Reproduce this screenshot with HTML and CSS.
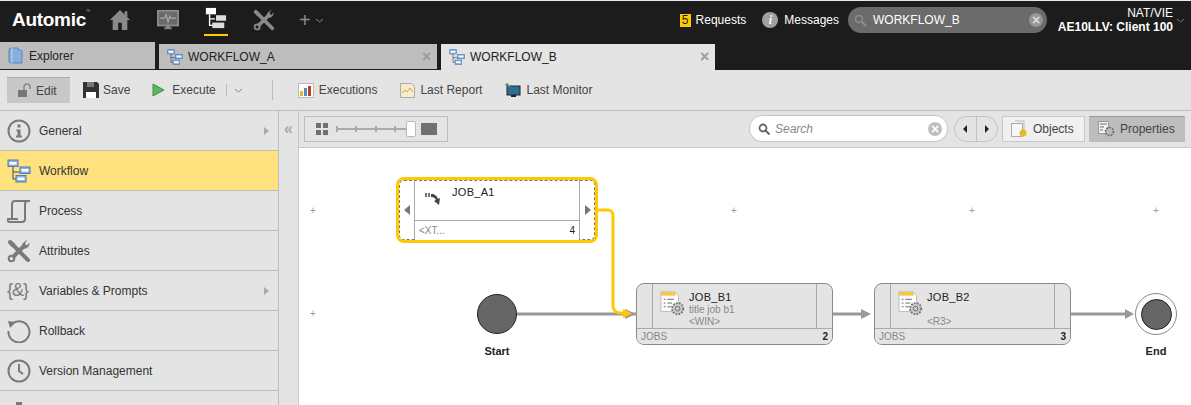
FILE: index.html
```html
<!DOCTYPE html>
<html lang="en">
<head>
    <meta charset="UTF-8">
    <title>Automic - WORKFLOW_B</title>
    <link rel="stylesheet" href="styles.css">
</head>
<body>
<svg class="defs" width="0" height="0">
    <symbol id="wf" viewBox="0 0 24 24">
        <path d="M6 7v13h5M6 13h8" fill="none" stroke="#445" stroke-width="1"/>
        <rect x="1" y="1" width="10" height="6.500" fill="#8db4e0" stroke="#4a7db5"/>
        <rect x="2.500" y="3" width="7" height="2.500" fill="#fff"/>
        <rect x="13" y="8" width="10" height="6.500" fill="#8db4e0" stroke="#4a7db5"/>
        <rect x="14.500" y="10" width="7" height="2.500" fill="#fff"/>
        <rect x="9" y="16.500" width="10" height="6.500" fill="#8db4e0" stroke="#4a7db5"/>
        <rect x="10.500" y="18.500" width="7" height="2.500" fill="#fff"/>
    </symbol>
    <symbol id="wrench" viewBox="0 0 24 24">
        <path d="M3 3l18 18" stroke="currentColor" stroke-width="4" stroke-linecap="round" fill="none"/>
        <path d="M1.500 4L4 1.500l4 3-3.500 3.500z" fill="currentColor"/>
        <path d="M18 6L5.500 18.500" stroke="currentColor" stroke-width="4" fill="none"/>
        <circle cx="4.500" cy="19.500" r="2.800" fill="none" stroke="currentColor" stroke-width="2"/>
        <path d="M22.500 3.500a5.500 5.500 0 0 1-8 5.500l1-4.500 4-3.500a5 5 0 0 1 .5 0l-2 3.500 2 2z" fill="currentColor"/>
    </symbol>
    <symbol id="jobdoc" viewBox="0 0 28 28">
        <path d="M1 1h15l4 4v17H1z" fill="#fdfdfd" stroke="#b8b8b8"/>
        <rect x="1" y="1" width="16" height="4" fill="#f7c948"/>
        <path d="M4 9h2M8 9h7M4 13h2M8 13h5M4 17h2M8 17h4" stroke="#666" stroke-width="1"/>
        <circle cx="19" cy="19" r="6" fill="#ccc" stroke="#777" stroke-width="2" stroke-dasharray="2 1.200"/>
        <circle cx="19" cy="19" r="2.500" fill="none" stroke="#666"/>
    </symbol>
</svg>

<header class="topbar">
    <div class="logo">Automic<sup>TM</sup></div>
    <nav class="mainnav">
        <svg class="ni" width="22" height="22" viewBox="0 0 24 24"><path d="M12 1l11 11h-3v11h-6v-8h-4v8H4V12H1z" fill="#8a8a8a"/><rect x="17" y="2.500" width="3" height="6" fill="#8a8a8a"/></svg>
        <svg class="ni" width="22" height="22" viewBox="0 0 24 24"><rect x="1" y="2" width="22" height="16" fill="#6a6a6a" stroke="#8a8a8a" stroke-width="2"/><path d="M3 10h5l2-4 2 8 2-6 1 2h6" fill="none" stroke="#aaa" stroke-width="1.300"/><path d="M8 22h8v-2H8z" fill="#8a8a8a"/><rect x="10" y="18" width="4" height="3" fill="#8a8a8a"/></svg>
        <div class="ni active">
            <svg width="22" height="22" viewBox="0 0 24 24"><path d="M5 8v12h4M5 13h6" fill="none" stroke="#fff" stroke-width="1.500"/><rect x="1" y="1" width="11" height="7" fill="#fff"/><rect x="12" y="9" width="11" height="6" fill="#ddd"/><rect x="8" y="17" width="13" height="6" fill="#ddd"/></svg>
        </div>
        <svg class="ni tools" width="22" height="22"><use href="#wrench"/></svg>
        <div class="addnew">+<svg width="9" height="5" viewBox="0 0 9 5"><path d="M1 1l3.500 3L8 1" fill="none" stroke="#8a8a8a"/></svg></div>
    </nav>
    <div class="status">
        <div class="req"><span class="badge">5</span>Requests</div>
        <div class="msg"><span class="infoi">i</span>Messages</div>
        <div class="gsearch">
            <svg width="13" height="13" viewBox="0 0 13 13"><circle cx="5" cy="5" r="3.500" fill="none" stroke="#8e8e8e" stroke-width="1.500"/><path d="M8 8l4 4" stroke="#8e8e8e" stroke-width="2"/></svg>
            <span class="gtext">WORKFLOW_B</span>
            <span class="clr dark">&#215;</span>
        </div>
        <div class="user">NAT/VIE<b>AE10LLV: Client 100</b></div>
        <svg class="userchev" width="9" height="5" viewBox="0 0 9 5"><path d="M1 1l3.500 3L8 1" fill="none" stroke="#777"/></svg>
    </div>
</header>

<div class="tabs">
    <div class="tab explorer">
        <svg width="15" height="17" viewBox="0 0 15 17"><path d="M1 2l3-1h6v2h3l1 1v12H4l-3-1z" fill="#86aede" stroke="#5d86bb"/><path d="M4 1v15" stroke="#c2d6ee"/></svg>
        Explorer
    </div>
    <div class="tab wa">
        <svg width="16" height="16"><use href="#wf"/></svg>
        WORKFLOW_A<span class="x">&#215;</span>
    </div>
    <div class="tab wb">
        <svg width="16" height="16"><use href="#wf"/></svg>
        WORKFLOW_B<span class="x">&#215;</span>
    </div>
</div>

<div class="toolbar">
    <div class="tbtn edit">
        <svg width="15" height="15" viewBox="0 0 15 15"><rect x="1" y="7" width="9" height="7" fill="#777"/><path d="M7 7V4a3 3 0 0 1 6 0v2" fill="none" stroke="#888" stroke-width="1.500"/></svg>
        Edit
    </div>
    <div class="tbtn save">
        <svg width="16" height="16" viewBox="0 0 16 16"><path d="M0 0h14l2 2v14H0z" fill="#333"/><rect x="3" y="10" width="10" height="6" fill="#fff"/><rect x="4" y="0" width="7" height="5" fill="#777"/></svg>
        Save
    </div>
    <div class="tbtn exec">
        <svg width="13" height="14" viewBox="0 0 13 14"><path d="M1 1l11 6-11 6z" fill="#5cb85c" stroke="#3d943d"/></svg>
        Execute
        <span class="sep small"></span>
        <svg width="9" height="5" viewBox="0 0 9 5"><path d="M1 1l3.500 3L8 1" fill="none" stroke="#888"/></svg>
    </div>
    <span class="sep"></span>
    <div class="tbtn first">
        <svg width="16" height="15" viewBox="0 0 16 15"><rect x=".5" y=".5" width="15" height="14" fill="#fff" stroke="#bbb"/><rect x="2" y="8" width="3" height="5" fill="#e8b923"/><rect x="6" y="5" width="3" height="8" fill="#4a90c2"/><rect x="10" y="3" width="3" height="10" fill="#c0392b"/></svg>
        Executions
    </div>
    <div class="tbtn report">
        <svg width="15" height="15" viewBox="0 0 15 15"><path d="M.5.5h11l3 3v11H.5z" fill="#f3ecd0" stroke="#aaa"/><path d="M2 10l3-3 2 2 3-4 3 4" fill="none" stroke="#d8a428"/></svg>
        Last Report
    </div>
    <div class="tbtn monitor">
        <svg width="17" height="16" viewBox="0 0 17 16"><rect x="3" y="4" width="13" height="9" fill="#2c6f96" stroke="#222"/><rect x="7" y="13" width="5" height="2" fill="#222"/><path d="M1 2l3-1 1 3 3 0-3 1-3-1z" fill="#4f9a5c"/></svg>
        Last Monitor
    </div>
</div>

<div class="main">
    <aside class="sidebar">
        <div class="row">
            <svg class="ic" width="24" height="24" viewBox="0 0 24 24"><circle cx="12" cy="12" r="10.500" fill="none" stroke="#7a7a7a" stroke-width="2"/><rect x="10.500" y="5.500" width="3" height="3" fill="#7a7a7a"/><path d="M9.500 10.500h4v6h1.500v2h-6v-2h1.500v-4h-1z" fill="#7a7a7a"/></svg>
            General<i class="more"></i>
        </div>
        <div class="row sel">
            <svg class="ic" width="24" height="24"><use href="#wf"/></svg>
            Workflow
        </div>
        <div class="row">
            <svg class="ic" width="24" height="24" viewBox="0 0 24 24"><path d="M23 2h-2c-2 0-3 1-3 3v15c0 2-1 3-3 3H3c-2 0-3-1-3-3h11M5 19V5c0-2 1-3 3-3h13" fill="none" stroke="#7a7a7a" stroke-width="2"/></svg>
            Process
        </div>
        <div class="row">
            <svg class="ic tools2" width="24" height="24"><use href="#wrench"/></svg>
            Attributes
        </div>
        <div class="row">
            <span class="ic amp">{&amp;}</span>
            Variables &amp; Prompts<i class="more"></i>
        </div>
        <div class="row">
            <svg class="ic" width="24" height="24" viewBox="0 0 24 24"><path d="M5 5a10.500 10.500 0 1 1-3.500 7" fill="none" stroke="#7a7a7a" stroke-width="2"/><path d="M1 2l8 1-6 6z" fill="#7a7a7a"/></svg>
            Rollback
        </div>
        <div class="row">
            <svg class="ic" width="24" height="24" viewBox="0 0 24 24"><circle cx="12" cy="12" r="10.500" fill="none" stroke="#7a7a7a" stroke-width="2"/><path d="M12 5v7l4 3" fill="none" stroke="#7a7a7a" stroke-width="2"/></svg>
            Version Management
        </div>
        <div class="row last">
            <svg class="ic" width="24" height="24" viewBox="0 0 24 24"><path d="M9 3h6v3h7v12H2V6h7z" fill="#7a7a7a"/></svg>
        </div>
    </aside>
    <div class="strip"><span class="collapse">&#171;</span></div>
    <section class="work">
        <div class="subbar">
            <div class="zoombox">
                <svg width="12" height="12" viewBox="0 0 12 12"><path d="M0 0h5v5H0zM7 0h5v5H7zM0 7h5v5H0zM7 7h5v5H7z" fill="#707070"/></svg>
                <div class="slider"><b></b><b></b><b></b><b></b><span class="thumb"></span></div>
                <span class="big"></span>
            </div>
            <div class="searchbox">
                <svg width="12" height="12" viewBox="0 0 12 12"><circle cx="5" cy="5" r="3.500" fill="none" stroke="#666" stroke-width="1.800"/><path d="M7.500 7.500l4 4" stroke="#666" stroke-width="2"/></svg>
                <span class="ph">Search</span>
                <span class="clr">&#215;</span>
            </div>
            <div class="pager"><span class="pg"><i class="tri l"></i></span><span class="pg"><i class="tri r"></i></span></div>
            <div class="vbtn">
                <svg width="17" height="17" viewBox="0 0 17 17"><path d="M4 1h9v12" fill="none" stroke="#bbb"/><rect x=".5" y="3.500" width="11" height="13" fill="#f8f8f8" stroke="#aaa"/><circle cx="12" cy="13" r="3.500" fill="#e8b923"/></svg>
                Objects
            </div>
            <div class="vbtn on">
                <svg width="17" height="17" viewBox="0 0 17 17"><rect x=".5" y="1.500" width="10" height="12" fill="#f4f4f4" stroke="#999"/><path d="M2 4h7M2 7h4M2 10h3" stroke="#668" /><circle cx="11.500" cy="11.500" r="4" fill="#bbb" stroke="#666" stroke-width="1.500" stroke-dasharray="2 1"/></svg>
                Properties
            </div>
        </div>

        <div class="canvas">
            <svg class="wires" width="892" height="257">
                <path d="M218 166h120" stroke="#999" stroke-width="3"/>
                <path d="M326 161l11 5-11 5z" fill="#999"/>
                <path d="M534 166h35" stroke="#999" stroke-width="3"/>
                <path d="M562 161l10 5-10 5z" fill="#999"/>
                <path d="M772 166h60" stroke="#999" stroke-width="3"/>
                <path d="M826 161l9 5-9 5z" fill="#999"/>
                <path d="M299 62h10a5 5 0 0 1 5 5v91a7 7 0 0 0 7 7h7" fill="none" stroke="#ffc800" stroke-width="3"/>
                <path d="M324 161l9 4.500-9 4.500z" fill="#ffc800"/>
            </svg>

            <span class="plus p1">+</span>
            <span class="plus p2">+</span>
            <span class="plus p3">+</span>
            <span class="plus p4">+</span>
            <span class="plus p5">+</span>

            <div class="node a1">
                <div class="side"><i class="tri l"></i></div>
                <div class="body">
                    <div class="top">
                        <svg class="ji" width="17" height="14" viewBox="0 0 17 14"><path d="M1 1v4M4 1v4" stroke="#444" stroke-width="1.500"/><path d="M6 2c4 0 6 2 7 5l2-1-1 7-5-4 2-1C10 6 9 5 6 5z" fill="#444"/></svg>
                        <div class="info"><div class="name">JOB_A1</div></div>
                    </div>
                    <div class="foot"><span>&lt;XT...</span><b>4</b></div>
                </div>
                <div class="side"><i class="tri r"></i></div>
            </div>

            <div class="node b1">
                <div class="side"></div>
                <div class="body">
                    <div class="top">
                        <svg class="ji" width="26" height="26"><use href="#jobdoc"/></svg>
                        <div class="info">
                            <div class="name">JOB_B1</div>
                            <div class="sub">title job b1</div>
                            <div class="sub">&lt;WIN&gt;</div>
                        </div>
                    </div>
                    <div class="foot"><span>JOBS</span><b>2</b></div>
                </div>
                <div class="side"></div>
            </div>

            <div class="node b2">
                <div class="side"></div>
                <div class="body">
                    <div class="top">
                        <svg class="ji" width="26" height="26"><use href="#jobdoc"/></svg>
                        <div class="info">
                            <div class="name">JOB_B2</div>
                            <div class="sub">&nbsp;</div>
                            <div class="sub">&lt;R3&gt;</div>
                        </div>
                    </div>
                    <div class="foot"><span>JOBS</span><b>3</b></div>
                </div>
                <div class="side"></div>
            </div>

            <div class="dot start"></div>
            <div class="lbl lstart">Start</div>
            <div class="ring"><div class="dot inner"></div></div>
            <div class="lbl lend">End</div>
        </div>
    </section>
</div>
</body>
</html>
```

FILE: styles.css
```css
* {
    box-sizing: border-box;
}

html, body {
    margin: 0;
    padding: 0;
    height: 405px;
    overflow: hidden;
}

body {
    font-family: "Liberation Sans", Arial, sans-serif;
    font-size: 12px;
    color: #333;
    background-color: #1c1c1c;
}

.defs {
    display: block;
    height: 0;
}

.topbar {
    height: 42px;
    border-top: 1px solid #e8e8e8;
    background-color: #1c1c1c;
    display: flex;
    align-items: center;
    color: #fff;
}

.logo {
    width: 109px;
    padding-left: 12px;
    font-size: 19px;
    font-weight: bold;
    letter-spacing: -0.3px;
    margin-top: -4px;
}

.logo sup {
    font-size: 3px;
    font-weight: normal;
    vertical-align: 14px;
    color: #999;
}

.mainnav {
    display: flex;
    align-items: center;
    gap: 26px;
    margin-top: -3px;
}

.ni {
    flex: none;
}

.ni.active {
    width: 24px;
    height: 29px;
    margin: 3px -1px 0;
    border-bottom: 2px solid #ffc800;
    display: flex;
    justify-content: center;
}

.tools {
    color: #8a8a8a;
}

.addnew {
    display: flex;
    align-items: center;
    gap: 4px;
    font-size: 20px;
    color: #8a8a8a;
    margin-left: -2px;
}

.status {
    margin-left: auto;
    display: flex;
    align-items: center;
    margin-top: -3px;
    padding-right: 6px;
}

.req, .msg {
    display: flex;
    align-items: center;
    gap: 5px;
}

.badge {
    width: 11px;
    height: 13px;
    background-color: #ffc800;
    color: #1c1c1c;
    text-align: center;
    line-height: 13px;
}

.msg {
    margin-left: 16px;
    gap: 6px;
}

.infoi {
    width: 16px;
    height: 16px;
    border-radius: 50%;
    background-color: #a0a0a0;
    color: #fff;
    font: italic bold 12px "Liberation Serif", serif;
    text-align: center;
    line-height: 16px;
}

.gsearch {
    width: 199px;
    height: 26px;
    margin-left: 9px;
    padding: 0 4px 0 6px;
    border-radius: 13px;
    background-color: #6b6b6b;
    display: flex;
    align-items: center;
    gap: 6px;
}

.gtext {
    flex: 1;
}

.clr {
    width: 14px;
    height: 14px;
    border-radius: 50%;
    background-color: #bdbdbd;
    color: #fff;
    font-size: 14px;
    font-weight: bold;
    line-height: 14px;
    text-align: center;
}

.clr.dark {
    background-color: #959595;
    color: #ddd;
}

.user {
    width: 126px;
    text-align: right;
    line-height: 14px;
}

.user b {
    display: block;
}

.userchev {
    margin-left: 3px;
}

.tabs {
    height: 27px;
    display: flex;
    align-items: flex-end;
    gap: 4px;
    padding-bottom: 0;
}

.tab {
    height: 25px;
    background-color: #bdbdbd;
    color: #222;
    display: flex;
    align-items: center;
    gap: 5px;
    padding-left: 8px;
    position: relative;
}

.tab.explorer {
    width: 155px;
    height: 27px;
    gap: 6px;
}

.tab.wa {
    width: 278px;
}

.tab.wb {
    width: 274px;
    height: 26px;
    margin-bottom: -1px;
    background-color: #e4e4e4;
}

.tab .x {
    margin-left: auto;
    margin-right: 3px;
    font-size: 16px;
    font-weight: bold;
    color: #9a9a9a;
    width: 12px;
}

.toolbar {
    height: 41px;
    margin-top: 1px;
    background-color: #e4e4e4;
    border-bottom: 1px solid #bdbdbd;
    display: flex;
    align-items: center;
    padding-left: 7px;
    color: #444;
}

.tbtn {
    display: flex;
    align-items: center;
    gap: 5px;
    height: 26px;
}

.edit {
    width: 63px;
    padding-left: 10px;
    gap: 4px;
    background-color: #c8c8c8;
    border-top: 1px solid #aaa;
}

.save {
    margin-left: 13px;
    gap: 4px;
}

.exec {
    margin-left: 22px;
    gap: 7px;
}

.sep {
    width: 1px;
    height: 20px;
    background-color: #bbb;
    margin-left: 29px;
}

.sep.small {
    height: 12px;
    margin: 0 0 0 3px;
}

.first {
    margin-left: 25px;
}

.report {
    margin-left: 23px;
}

.monitor {
    margin-left: 22px;
}

.main {
    height: 295px;
    display: flex;
    background-color: #e4e4e4;
}

.sidebar {
    width: 279px;
    border-right: 1px solid #bdbdbd;
    flex: none;
    overflow: hidden;
}

.row {
    height: 40px;
    border-bottom: 1px solid #bdbdbd;
    display: flex;
    align-items: center;
    padding: 0 9px 0 7px;
    gap: 8px;
}

.row.sel {
    background-color: #ffe17d;
}

.row.last {
    align-items: flex-start;
    padding-top: 8px;
}

.ic {
    flex: none;
    color: #7a7a7a;
}

.amp {
    width: 24px;
    font-size: 18px;
    white-space: nowrap;
    letter-spacing: -1px;
}

.more {
    margin-left: auto;
    width: 0;
    height: 0;
    border-left: 5px solid #aaa;
    border-top: 4px solid transparent;
    border-bottom: 4px solid transparent;
}

.strip {
    width: 20px;
    flex: none;
    border-right: 1px solid #c8c8c8;
    text-align: center;
}

.collapse {
    display: block;
    margin-top: 9px;
    font-size: 16px;
    font-weight: bold;
    color: #aaa;
}

.work {
    flex: 1;
    display: flex;
    flex-direction: column;
}

.subbar {
    height: 37px;
    border-bottom: 1px solid #c8c8c8;
    display: flex;
    align-items: center;
    padding: 0 6px 1px 5px;
}

.zoombox {
    width: 144px;
    height: 26px;
    border: 1px solid #bdbdbd;
    display: flex;
    align-items: center;
    padding-left: 11px;
}

.slider {
    width: 72px;
    height: 8px;
    margin-left: 8px;
    display: flex;
    justify-content: space-between;
    align-items: center;
    position: relative;
    padding-right: 12px;
    background: linear-gradient(#aaa, #aaa) center / 100% 2px no-repeat;
}

.slider b {
    width: 2px;
    height: 6px;
    background-color: #aaa;
}

.thumb {
    position: absolute;
    right: -8px;
    top: -4px;
    width: 10px;
    height: 16px;
    background-color: #fff;
    border: 1px solid #bbb;
    border-radius: 2px;
}

.big {
    width: 16px;
    height: 12px;
    margin-left: 13px;
    background-color: #707070;
}

.searchbox {
    width: 199px;
    height: 27px;
    margin-left: auto;
    border: 1px solid #c4c4c4;
    border-radius: 13px;
    background-color: #fff;
    display: flex;
    align-items: center;
    padding: 0 5px 0 8px;
    gap: 5px;
}

.ph {
    flex: 1;
    font-style: italic;
    color: #888;
}

.pager {
    width: 44px;
    height: 26px;
    margin-left: 6px;
    border: 1px solid #c4c4c4;
    border-radius: 13px;
    display: flex;
}

.pg {
    flex: 1;
    display: flex;
    align-items: center;
    justify-content: center;
}

.pg:first-child {
    border-right: 1px solid #c4c4c4;
}

.tri {
    width: 0;
    height: 0;
    border-top: 5px solid transparent;
    border-bottom: 5px solid transparent;
}

.tri.l {
    border-right: 6px solid #777;
}

.tri.r {
    border-left: 6px solid #777;
}

.pg .tri {
    border-top-width: 4px;
    border-bottom-width: 4px;
    border-left-color: #222;
    border-right-color: #222;
}

.pg .tri.l {
    border-right-width: 4px;
}

.pg .tri.r {
    border-left-width: 4px;
}

.vbtn {
    width: 83px;
    height: 26px;
    margin-left: 4px;
    border: 1px solid #c8c8c8;
    background-color: #f0f0f0;
    display: flex;
    align-items: center;
    gap: 5px;
    padding-left: 8px;
    color: #444;
}

.vbtn.on {
    width: 96px;
    background-color: #bdbdbd;
    border-color: #bdbdbd;
    border-top-color: #999;
}

.canvas {
    flex: 1;
    background-color: #fff;
    position: relative;
    overflow: hidden;
}

.wires {
    position: absolute;
    left: 0;
    top: 0;
    z-index: 2;
    pointer-events: none;
}

.plus {
    position: absolute;
    color: #999;
    font-size: 10px;
    line-height: 10px;
}

.p1 { left: 11px; top: 58px; }
.p2 { left: 432px; top: 58px; }
.p3 { left: 670px; top: 58px; }
.p4 { left: 854px; top: 58px; }
.p5 { left: 11px; top: 161px; }

.node {
    position: absolute;
    width: 197px;
    height: 62px;
    border: 1px solid #8a8a8a;
    border-radius: 8px;
    background-color: #e4e4e4;
    display: flex;
    overflow: hidden;
}

.node .side {
    width: 15px;
    flex: none;
    display: flex;
    align-items: center;
    justify-content: center;
}

.node .body {
    flex: 1;
    border-left: 1px solid #aaa;
    border-right: 1px solid #aaa;
    display: flex;
    flex-direction: column;
}

.node .top {
    flex: 1;
    display: flex;
    padding: 7px 0 0 7px;
}

.node .ji {
    flex: none;
}

.info {
    margin-left: 3px;
}

.name {
    font-size: 11px;
    letter-spacing: 0.3px;
    color: #222;
    line-height: 13px;
}

.sub {
    font-size: 10px;
    color: #888;
    line-height: 12px;
}

.foot {
    height: 18px;
    border-top: 1px solid #aaa;
    margin: 0 -16px;
    padding: 0 4px;
    display: flex;
    align-items: center;
    justify-content: space-between;
    font-size: 10px;
    color: #888;
    background-color: #e4e4e4;
    position: relative;
}

.foot b {
    color: #222;
    font-weight: normal;
}

.b1 .foot b, .b2 .foot b {
    font-weight: bold;
}

.a1 {
    left: 97px;
    top: 29px;
    width: 202px;
    height: 66px;
    border: 3px solid #ffc800;
    background-color: #fff;
    outline: 1px dashed #777;
    outline-offset: -4px;
}

.a1 .body {
    background-color: #fff;
}

.a1 .foot {
    background-color: #fff;
    margin: 0;
    height: 20px;
}

.a1 .top {
    padding: 12px 0 0 10px;
}

.a1 .info {
    margin: -6px 0 0 10px;
}

.b1 {
    left: 337px;
    top: 135px;
}

.b2 {
    left: 575px;
    top: 135px;
}

.dot {
    width: 40px;
    height: 40px;
    border-radius: 50%;
    background-color: #666;
    border: 1px solid #222;
}

.start {
    position: absolute;
    left: 178px;
    top: 146px;
}

.ring {
    position: absolute;
    left: 836px;
    top: 145px;
    width: 42px;
    height: 42px;
    border: 1px solid #888;
    border-radius: 50%;
    display: flex;
    align-items: center;
    justify-content: center;
    background-color: #fff;
}

.inner {
    width: 31px;
    height: 31px;
}

.lbl {
    position: absolute;
    font-size: 11px;
    font-weight: bold;
    color: #222;
    width: 60px;
    text-align: center;
}

.lstart { left: 168px; top: 197px; }
.lend { left: 827px; top: 197px; }
```
